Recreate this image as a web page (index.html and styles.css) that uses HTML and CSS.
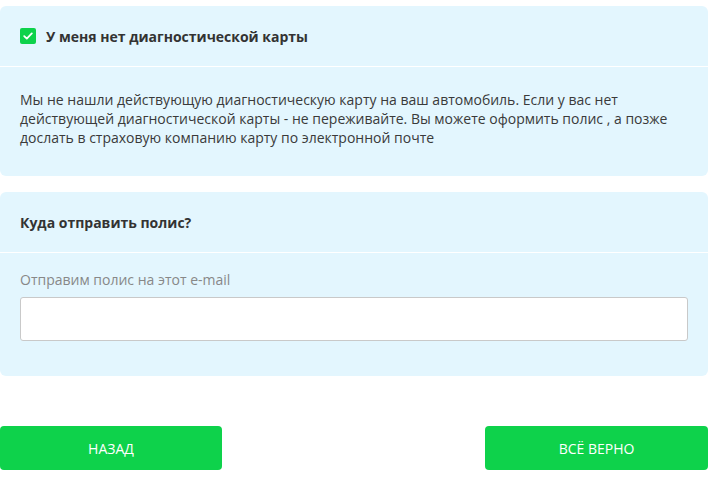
FILE: index.html
```html
<!DOCTYPE html>
<html lang="ru">
<head>
<meta charset="utf-8">
<link rel="stylesheet" href="styles.css">
</head>
<body>
<div class="page">
  <section class="card">
    <div class="card-head">
      <label class="check">
        <span class="box"><svg width="10" height="8" viewBox="0 0 10 8"><path d="M1.2 4.1 L3.8 6.6 L8.8 1.4" fill="none" stroke="#fff" stroke-width="1.8" stroke-linecap="round" stroke-linejoin="round"/></svg></span>
        <span class="title">У меня нет диагностической карты</span>
      </label>
    </div>
    <div class="card-body text">
      Мы не нашли действующую диагностическую карту на ваш автомобиль. Если у вас нет действующей диагностической карты - не переживайте. Вы можете оформить полис , а позже дослать в страховую компанию карту по электронной почте
    </div>
  </section>
  <section class="card">
    <div class="card-head">
      <span class="title">Куда отправить полис?</span>
    </div>
    <div class="card-body form">
      <div class="label">Отправим полис на этот e-mail</div>
      <input class="input" type="text">
    </div>
  </section>
  <div class="actions">
    <button class="btn">НАЗАД</button>
    <button class="btn">ВСЁ ВЕРНО</button>
  </div>
</div>
</body>
</html>
```
FILE: styles.css
```css
* { box-sizing: border-box; }
html, body { margin: 0; padding: 0; background: #fff; }
body {
  font-family: "Open Sans", "Liberation Sans", sans-serif;
  font-size: 14px;
  color: #333;
}
.page {
  width: 708px;
  padding-top: 6px;
  display: flex;
  flex-direction: column;
  gap: 16px;
}
.card {
  background: #e3f6fe;
  border-radius: 6px;
}
.card-head {
  height: 61px;
  padding: 0 20px;
  display: flex;
  align-items: center;
  border-bottom: 1px solid #fff;
}
.title {
  font-weight: 700;
  font-size: 14px;
  color: #333;
}
.check {
  display: flex;
  align-items: center;
  gap: 10px;
}
.box {
  width: 16px;
  height: 16px;
  border-radius: 2px;
  background: #0ed24b;
  display: flex;
  align-items: center;
  justify-content: center;
}
.text {
  padding: 23px 20px 29px;
  line-height: 19px;
  color: #3a3a3a;
}
.form {
  padding: 17px 20px 35px;
}
.label {
  line-height: 20px;
  color: #888;
  margin-bottom: 7px;
}
.input {
  display: block;
  width: 668px;
  height: 44px;
  border: 1px solid #c9c9c9;
  border-radius: 3px;
  background: #fff;
  font: inherit;
}
.actions {
  margin-top: 34px;
  display: flex;
  justify-content: space-between;
}
.btn {
  width: 222px;
  height: 44px;
  border: 0;
  border-radius: 4px;
  background: #0ed24b;
  color: #fff;
  font-family: "Open Sans", "Liberation Sans", sans-serif;
  font-size: 14px;
  padding: 0;
}
.btn:last-child { width: 223px; }
```
